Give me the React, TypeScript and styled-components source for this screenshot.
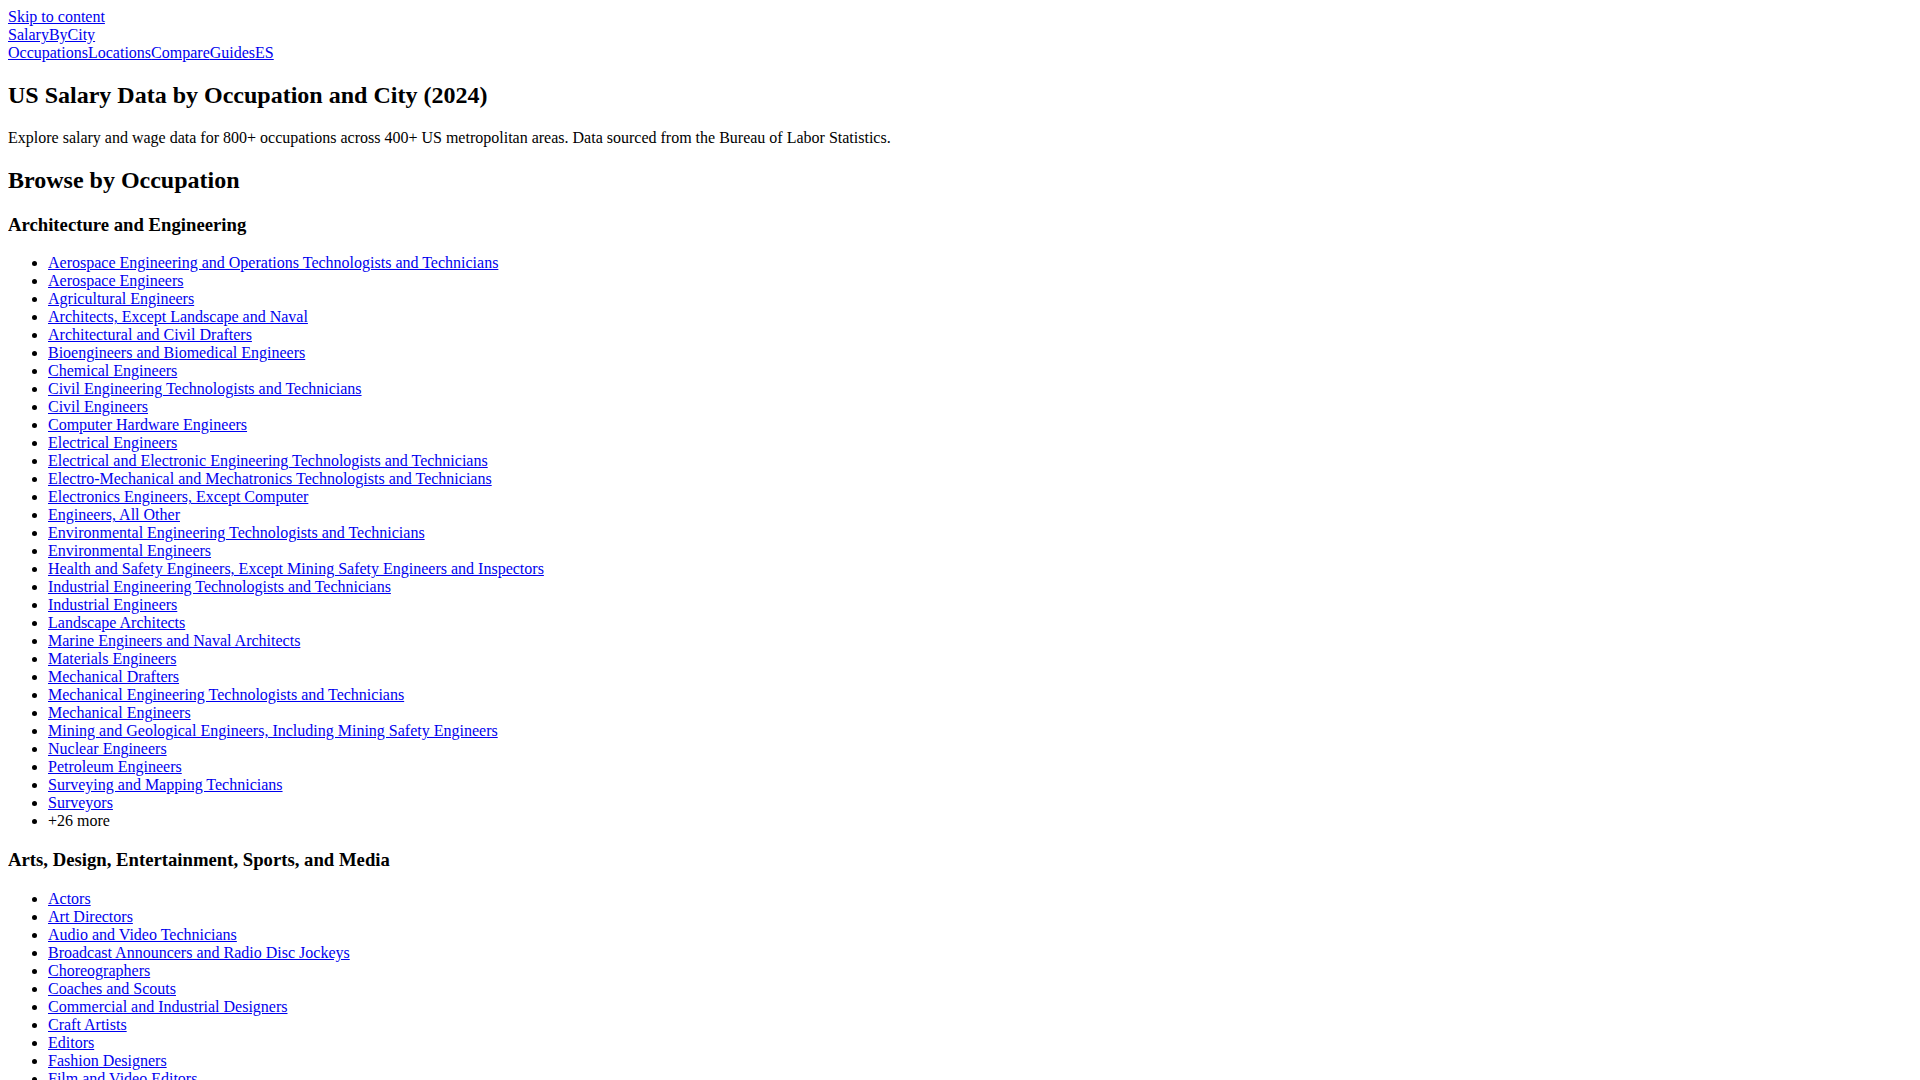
import { FC } from "react";
import styled, { createGlobalStyle } from "styled-components";

const GlobalStyle = createGlobalStyle`
  body {
    margin: 8px;
    font-family: "Liberation Serif", "Times New Roman", serif;
    font-size: 16px;
    color: #000;
    background: #fff;
  }
`

const Link = styled.a`
  color: #0000ee;
  text-decoration: underline;
  cursor: pointer;
`

const SkipLink = styled(Link)`
  display: inline;
`

const Header = styled.header`
  display: block;
`

const Brand = styled.div`
  display: block;
`

const Nav = styled.nav`
  display: block;
`

const Title = styled.h1`
  font-size: 1.5em;
  font-weight: bold;
  margin: 0.83em 0;
`

const Intro = styled.p`
  margin: 1em 0;
`

const SectionTitle = styled.h2`
  font-size: 1.5em;
  font-weight: bold;
  margin: 0.83em 0;
`

const GroupTitle = styled.h3`
  font-size: 1.17em;
  font-weight: bold;
  margin: 1em 0;
`

const List = styled.ul`
  list-style: disc;
  margin: 1em 0;
  padding-left: 40px;
`

const Item = styled.li`
  display: list-item;
`

interface IGroup {
    name: string
    items: string[]
    more?: number
}

const groups: IGroup[] = [
    {
        name: "Architecture and Engineering",
        items: [
            "Aerospace Engineering and Operations Technologists and Technicians",
            "Aerospace Engineers",
            "Agricultural Engineers",
            "Architects, Except Landscape and Naval",
            "Architectural and Civil Drafters",
            "Bioengineers and Biomedical Engineers",
            "Chemical Engineers",
            "Civil Engineering Technologists and Technicians",
            "Civil Engineers",
            "Computer Hardware Engineers",
            "Electrical Engineers",
            "Electrical and Electronic Engineering Technologists and Technicians",
            "Electro-Mechanical and Mechatronics Technologists and Technicians",
            "Electronics Engineers, Except Computer",
            "Engineers, All Other",
            "Environmental Engineering Technologists and Technicians",
            "Environmental Engineers",
            "Health and Safety Engineers, Except Mining Safety Engineers and Inspectors",
            "Industrial Engineering Technologists and Technicians",
            "Industrial Engineers",
            "Landscape Architects",
            "Marine Engineers and Naval Architects",
            "Materials Engineers",
            "Mechanical Drafters",
            "Mechanical Engineering Technologists and Technicians",
            "Mechanical Engineers",
            "Mining and Geological Engineers, Including Mining Safety Engineers",
            "Nuclear Engineers",
            "Petroleum Engineers",
            "Surveying and Mapping Technicians",
            "Surveyors",
        ],
        more: 26,
    },
    {
        name: "Arts, Design, Entertainment, Sports, and Media",
        items: [
            "Actors",
            "Art Directors",
            "Audio and Video Technicians",
            "Broadcast Announcers and Radio Disc Jockeys",
            "Choreographers",
            "Coaches and Scouts",
            "Commercial and Industrial Designers",
            "Craft Artists",
            "Editors",
            "Fashion Designers",
            "Film and Video Editors",
            "Fine Artists, Including Painters, Sculptors, and Illustrators",
            "Floral Designers",
            "Graphic Designers",
            "Interior Designers",
            "Interpreters and Translators",
        ],
        more: 24,
    },
]

const slug = (s: string) => s.toLowerCase().replace(/[^a-z0-9]+/g, "-")

const Group: FC<{ group: IGroup }> = ({group}) => (
    <section>
        <GroupTitle>{group.name}</GroupTitle>
        <List>
            {group.items.map((item) => (
                <Item key={item}>
                    <Link href={`#/occupations/${slug(item)}`}>{item}</Link>
                </Item>
            ))}
            {group.more && <Item>+{group.more} more</Item>}
        </List>
    </section>
)

export default function App() {
    return (
        <>
            <GlobalStyle/>
            <SkipLink href="#main">Skip to content</SkipLink>
            <Header>
                <Brand>
                    <Link href="#/">SalaryByCity</Link>
                </Brand>
                <Nav>
                    <Link href="#/occupations">Occupations</Link>
                    <Link href="#/locations">Locations</Link>
                    <Link href="#/compare">Compare</Link>
                    <Link href="#/guides">Guides</Link>
                    <Link href="#/es">ES</Link>
                </Nav>
            </Header>
            <main id="main">
                <Title>US Salary Data by Occupation and City (2024)</Title>
                <Intro>
                    Explore salary and wage data for 800+ occupations across 400+ US metropolitan areas. Data sourced
                    from the Bureau of Labor Statistics.
                </Intro>
                <SectionTitle>Browse by Occupation</SectionTitle>
                {groups.map((g) => <Group key={g.name} group={g}/>)}
            </main>
        </>
    )
}
